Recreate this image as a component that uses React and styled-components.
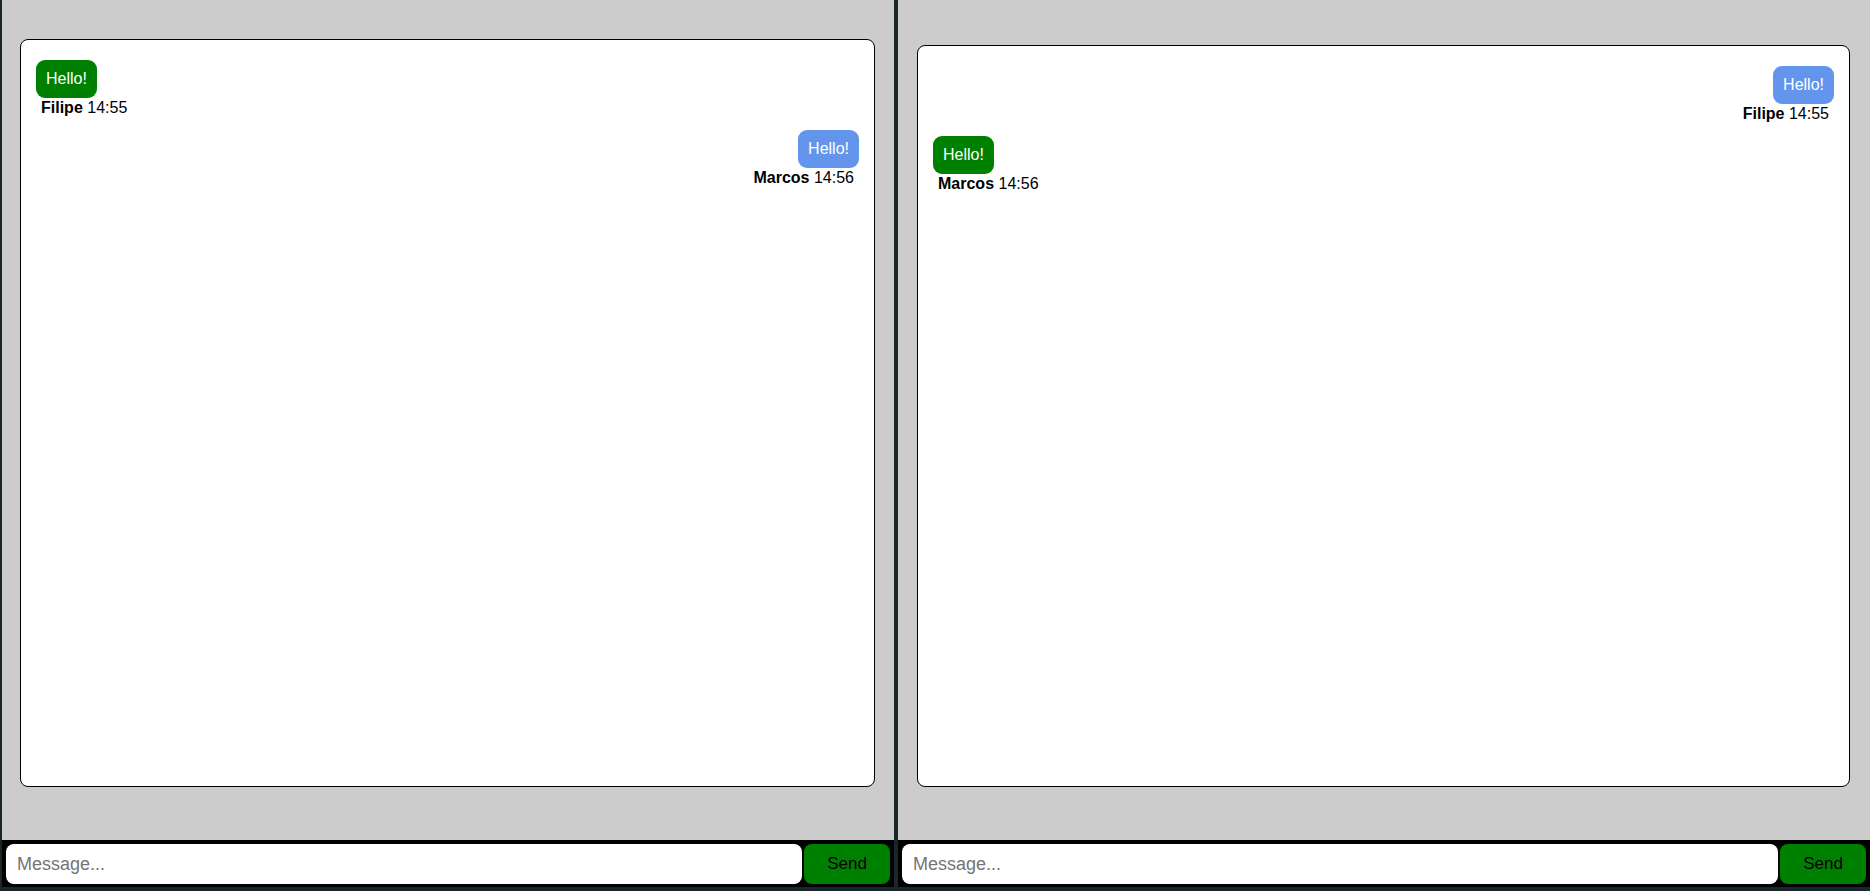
import React from 'react';
import styled, { createGlobalStyle } from 'styled-components';

const windows = [
  {
    id: 'filipe',
    width: '892px',
    cardMargin: '39px 19px 53px 18px',
    me: 'Filipe',
    messages: [
      { author: 'Filipe', time: '14:55', text: 'Hello!' },
      { author: 'Marcos', time: '14:56', text: 'Hello!' },
    ],
  },
  {
    id: 'marcos',
    width: 'auto',
    cardMargin: '45px 20px 53px 19px',
    me: 'Marcos',
    messages: [
      { author: 'Filipe', time: '14:55', text: 'Hello!' },
      { author: 'Marcos', time: '14:56', text: 'Hello!' },
    ],
  },
];

const App = () => (
  <>
    <GlobalStyle />
    <Desktop>
      {windows.map((w) => (
        <ChatWindow key={w.id} $width={w.width}>
          <ChatArea>
            <MessageCard $margin={w.cardMargin}>
              {w.messages.map((m, i) => {
                const mine = m.author === w.me;
                return (
                  <Message key={i} $mine={mine}>
                    <Bubble $mine={mine}>{m.text}</Bubble>
                    <Meta>
                      <Author>{m.author}</Author> {m.time}
                    </Meta>
                  </Message>
                );
              })}
            </MessageCard>
          </ChatArea>
          <InputBar>
            <MessageInput placeholder="Message..." />
            <SendButton>Send</SendButton>
          </InputBar>
        </ChatWindow>
      ))}
    </Desktop>
  </>
);

export default App;

const GlobalStyle = createGlobalStyle`
  html, body {
    margin: 0;
    padding: 0;
    overflow: hidden;
  }
  body {
    font-family: "Liberation Sans", Arial, sans-serif;
  }
`;

const Desktop = styled.div`
  box-sizing: border-box;
  width: 1870px;
  height: 891px;
  padding: 0 0 4px 2px;
  display: flex;
  gap: 4px;
  background: #1a262b;
`;

const ChatWindow = styled.div`
  width: ${(p) => p.$width};
  flex: ${(p) => (p.$width === 'auto' ? '1' : 'none')};
  display: flex;
  flex-direction: column;
  background: #000;
`;

const ChatArea = styled.div`
  flex: 1;
  display: flex;
  flex-direction: column;
  background: #cccccc;
  min-height: 0;
`;

const MessageCard = styled.div`
  flex: 1;
  margin: ${(p) => p.$margin};
  background: #fff;
  border: 1px solid #000;
  border-radius: 8px;
  padding: 20px 15px;
  display: flex;
  flex-direction: column;
`;

const Message = styled.div`
  display: flex;
  flex-direction: column;
  align-items: ${(p) => (p.$mine ? 'flex-start' : 'flex-end')};
  margin-bottom: 14px;
`;

const Bubble = styled.div`
  background: ${(p) => (p.$mine ? '#008000' : '#6495ed')};
  color: #fff;
  font-size: 16px;
  line-height: 18px;
  padding: 10px 10px;
  border-radius: 9px;
`;

const Meta = styled.div`
  font-size: 16px;
  line-height: 17px;
  color: #000;
  padding: 1px 5px 0;
`;

const Author = styled.b`
  font-weight: bold;
`;

const InputBar = styled.div`
  height: 47px;
  box-sizing: border-box;
  padding: 4px 4px 3px;
  display: flex;
  gap: 2px;
  background: #000;
`;

const MessageInput = styled.input`
  flex: 1;
  min-width: 0;
  border: none;
  outline: none;
  border-radius: 8px;
  padding: 0 11px;
  font-family: "Liberation Sans", Arial, sans-serif;
  font-size: 18px;
  background: #fff;
  &::placeholder {
    color: #757575;
  }
`;

const SendButton = styled.button`
  width: 86px;
  border: none;
  border-radius: 8px;
  background: #008000;
  color: #000;
  font-family: "Liberation Sans", Arial, sans-serif;
  font-size: 17px;
  cursor: pointer;
`;
